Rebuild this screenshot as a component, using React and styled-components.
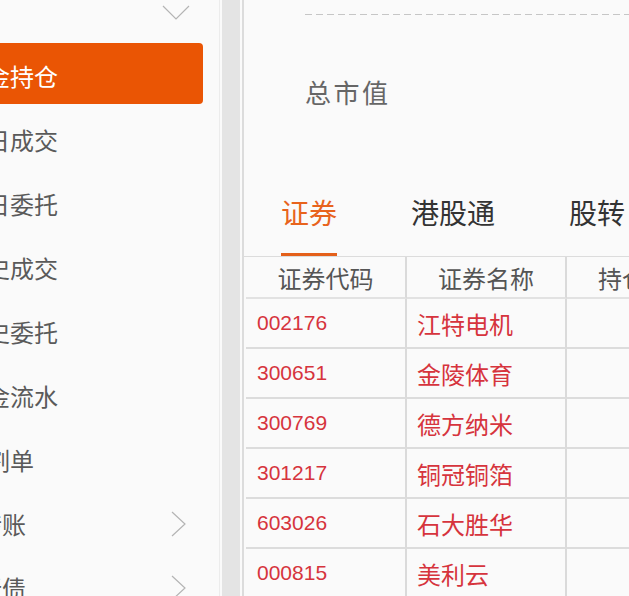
import React from "react"
import styled, { createGlobalStyle } from "styled-components"

const GlobalStyle = createGlobalStyle`
  html, body {
    margin: 0;
    padding: 0;
    background: #fafafa;
    overflow: hidden;
  }
  body {
    font-family: "Noto Sans CJK SC", "Liberation Sans", sans-serif;
  }
`

const Page = styled.div`
  display: flex;
  height: 596px;
  overflow: hidden;
`

const Sidebar = styled.nav`
  flex: 0 0 219px;
  border-right: 1px solid #ececec;
  background: #fafafa;
  overflow: hidden;
`

const MenuList = styled.ul`
  list-style: none;
  margin: -20px 0 0;
  padding: 0;
`

const Item = styled.li`
  box-sizing: border-box;
  display: flex;
  align-items: center;
  justify-content: space-between;
  height: 64px;
  margin-right: 16px;
  font-size: 24px;
  line-height: 28px;
  color: ${p => (p.$active ? "#fff" : "#5a5a5a")};
  white-space: nowrap;

  ${p =>
    p.$active &&
    `
    height: 61px;
    margin-top: -1px;
    margin-bottom: 4px;
    padding-top: 5px;
    background: #ea5504;
    border-radius: 0 4px 4px 0;
  `}
`

const Label = styled.span`
  margin-left: ${p => p.$indent}px;
`

const Arrow = styled.svg`
  flex: none;
  margin-right: ${p => p.$right}px;
  stroke: #b4b4b4;
  stroke-width: 1.2;
  fill: none;
`

const Track = styled.div`
  flex: 0 0 18px;
  margin: 0 2px;
  background: #e4e4e4;
`

const Main = styled.main`
  flex: 1;
  min-width: 0;
  border-left: 2px solid #dcdcdc;
  background: #fafafa;
  overflow: hidden;
`

const DashedRule = styled.div`
  height: 1px;
  margin: 14px 0 0 61px;
  background-image: linear-gradient(to right, #c6c6c6 0 7px, transparent 7px 11px);
  background-size: 11px 1px;
`

const Summary = styled.div`
  margin: 57px 0 0 61px;
  font-size: 26px;
  line-height: 40px;
  letter-spacing: 2.5px;
  color: #666;
`

const TabBar = styled.div`
  display: flex;
  padding-top: 80px;
  border-bottom: 1px solid #dcdcdc;
  white-space: nowrap;
`

const Tab = styled.div`
  padding: 0 37px;
  font-size: 28px;
  line-height: 40px;
  color: ${p => (p.$active ? "#e8631c" : "#333")};
`

const TabText = styled.span`
  display: inline-block;
  padding-bottom: 21px;
  border-bottom: 3px solid ${p => (p.$active ? "#e4601a" : "transparent")};
`

const Table = styled.table`
  margin-left: 2px;
  table-layout: fixed;
  border-collapse: separate;
  border-spacing: 0;
  width: 641px;
`

const Th = styled.th`
  width: ${p => p.$w}px;
  height: 40px;
  padding: 0;
  font-size: 24px;
  font-weight: normal;
  color: #555;
  text-align: center;
  white-space: nowrap;
  overflow: hidden;
  border-bottom: 2px solid #e2e2e2;
  border-right: 2px solid #dadada;
`

const Td = styled.td`
  height: 48px;
  padding: 0 0 0 ${p => (p.$code ? 11 : 10)}px;
  font-family: ${p =>
    p.$code ? `"Liberation Sans", sans-serif` : `"Noto Sans CJK SC", sans-serif`};
  font-size: ${p => (p.$code ? 21 : 24)}px;
  color: #d6343d;
  white-space: nowrap;
  border-bottom: 2px solid #dcdcdc;
  border-right: 2px solid #dadada;
`

const menu = [
  { label: "", down: true },
  { label: "资金持仓", active: true },
  { label: "当日成交" },
  { label: "当日委托" },
  { label: "历史成交" },
  { label: "历史委托" },
  { label: "资金流水" },
  { label: "交割单" },
  { label: "银证转账", sub: true },
  { label: "申购新债", sub: true },
]

const rows = [
  ["002176", "江特电机"],
  ["300651", "金陵体育"],
  ["300769", "德方纳米"],
  ["301217", "铜冠铜箔"],
  ["603026", "石大胜华"],
  ["000815", "美利云"],
]

const ChevronDown = () => (
  <Arrow $right={13} width="28" height="15" viewBox="0 0 28 15">
    <polyline points="1,1 14,14 27,1" />
  </Arrow>
)

const ChevronRight = () => (
  <Arrow $right={17} width="15" height="26" viewBox="0 0 15 26">
    <polyline points="1,1 14,13 1,25" />
  </Arrow>
)

export default function App() {
  return (
    <Page>
      <GlobalStyle />
      <Sidebar>
        <MenuList>
          {menu.map((m, i) => (
            <Item key={i} $active={m.active}>
              <Label $indent={m.sub ? -70 : -38}>{m.label}</Label>
              {m.down && <ChevronDown />}
              {m.sub && <ChevronRight />}
            </Item>
          ))}
        </MenuList>
      </Sidebar>
      <Track />
      <Main>
        <DashedRule />
        <Summary>总市值</Summary>
        <TabBar>
          <Tab $active>
            <TabText $active>证券</TabText>
          </Tab>
          <Tab>
            <TabText>港股通</TabText>
          </Tab>
          <Tab>
            <TabText>股转</TabText>
          </Tab>
        </TabBar>
        <Table>
          <thead>
            <tr>
              <Th $w={159}>证券代码</Th>
              <Th $w={158}>证券名称</Th>
              <Th $w={158}>持仓数量</Th>
              <Th $w={158}>可用数量</Th>
            </tr>
          </thead>
          <tbody>
            {rows.map(([code, name]) => (
              <tr key={code}>
                <Td $code>{code}</Td>
                <Td>{name}</Td>
                <Td />
                <Td />
              </tr>
            ))}
          </tbody>
        </Table>
      </Main>
    </Page>
  )
}
